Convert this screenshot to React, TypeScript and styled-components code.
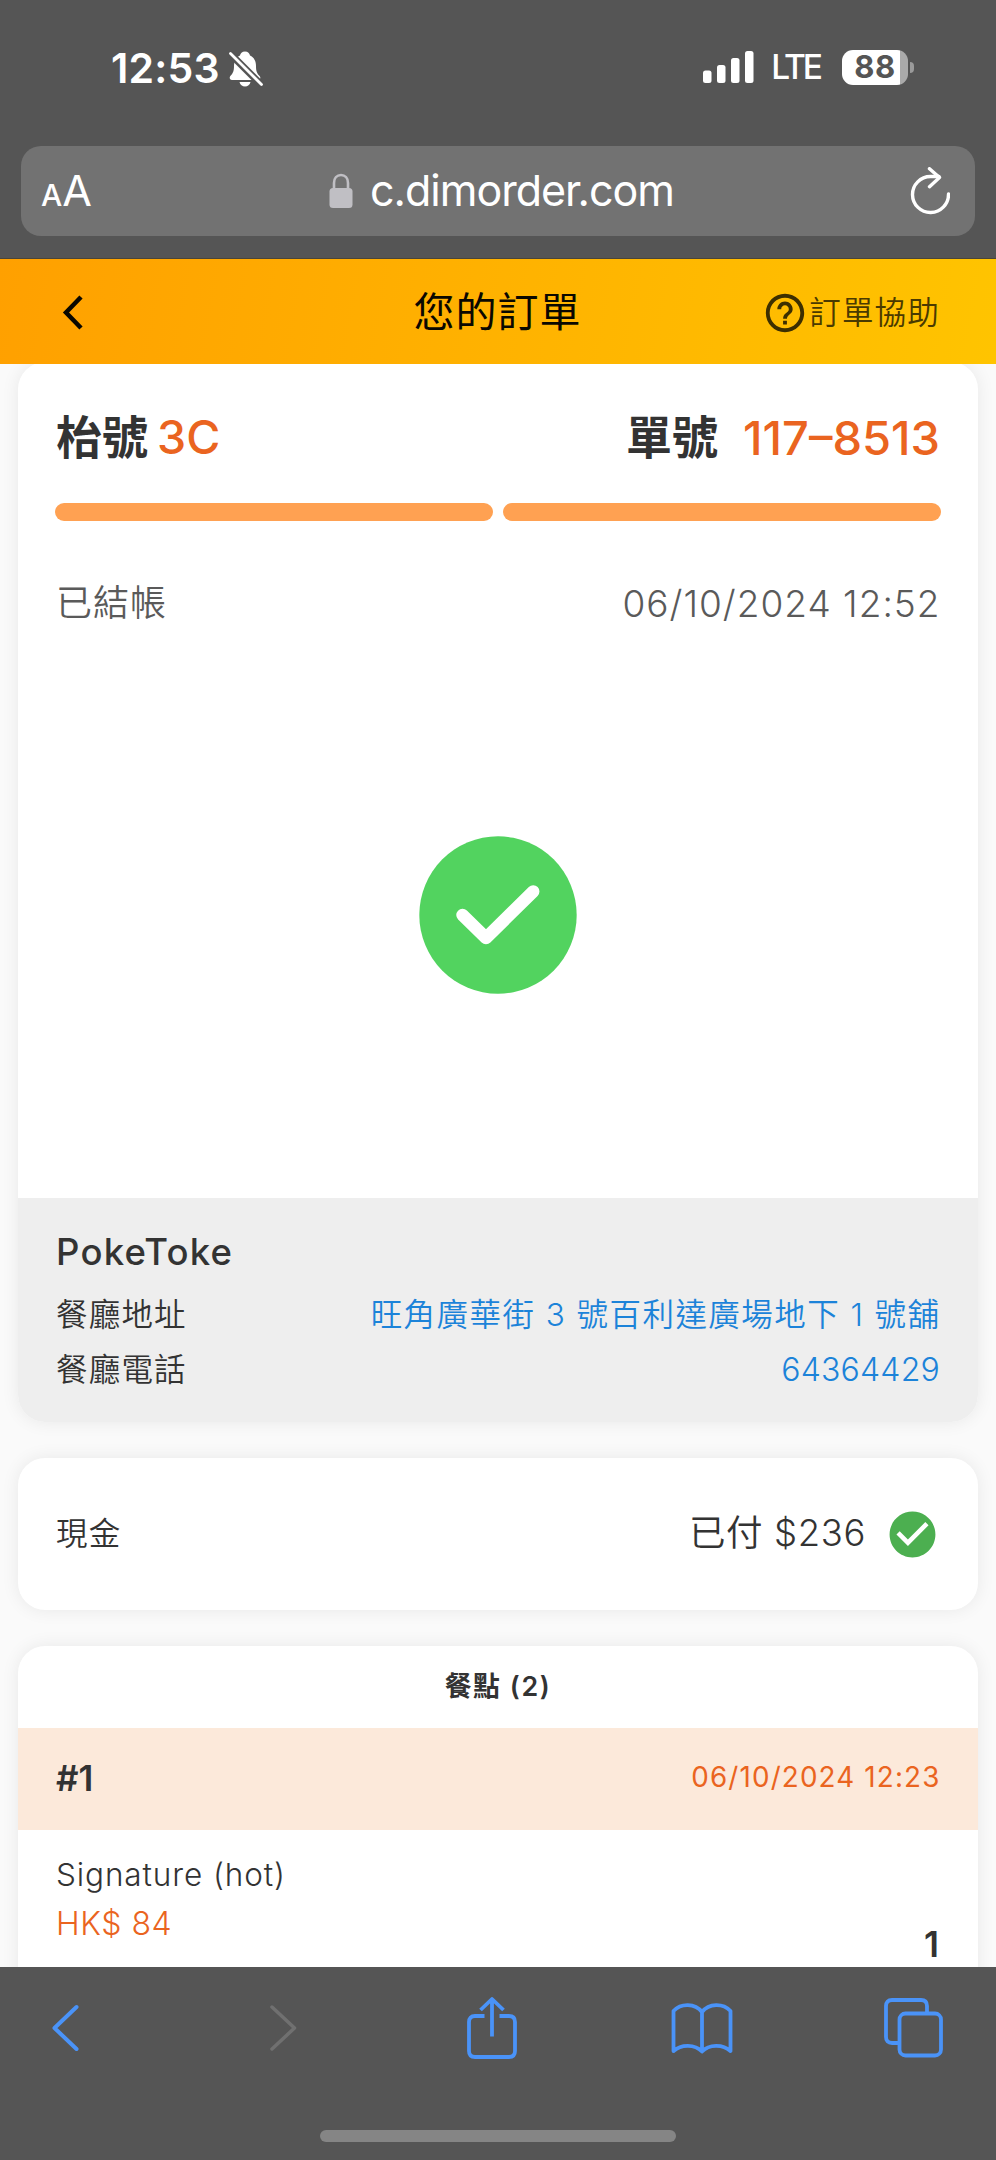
import React from "react";
import styled, { createGlobalStyle } from "styled-components";

const GlobalStyle = createGlobalStyle`
  *, *::before, *::after { box-sizing: border-box; }
  body {
    margin: 0;
    background: #fafafa;
    font-family: Inter, "Noto Sans CJK TC", sans-serif;
    -webkit-font-smoothing: antialiased;
  }
  svg { display: block; flex: none; }
`;

const Screen = styled.div`
  width: 996px;
  height: 2160px;
  display: flex;
  flex-direction: column;
  overflow: hidden;
  background: #fafafa;
`;

const BrowserTop = styled.header`
  height: 259px;
  flex: none;
  background: #555;
  border-bottom: 1px solid #4a4538;
  padding: 0 21px;
`;

const StatusBar = styled.div`
  height: 146px;
  padding: 38px 61px 48px 90px;
  display: flex;
  justify-content: space-between;
  align-items: center;
`;

const StatusGroup = styled.div<{ $mt?: number }>`
  display: flex;
  align-items: center;
  margin-top: ${(p) => p.$mt ?? 0}px;
`;

interface TextProps {
  $size: number;
  $weight?: number;
  $color?: string;
  $spacing?: number;
  $ml?: number;
}

const Text = styled.span<TextProps>`
  font-size: ${(p) => p.$size}px;
  font-weight: ${(p) => p.$weight ?? 400};
  color: ${(p) => p.$color ?? "#333"};
  letter-spacing: ${(p) => p.$spacing ?? 0}px;
  margin-left: ${(p) => p.$ml ?? 0}px;
  line-height: 1.2;
  white-space: pre;
`;

const Battery = styled.div`
  width: 66px;
  height: 35px;
  margin-left: 22px;
  border-radius: 11px;
  display: flex;
  align-items: center;
  justify-content: center;
  background: linear-gradient(to right, #fff 58px, #aaa 58px);
`;

const BatteryTip = styled.div`
  width: 4px;
  height: 11px;
  margin-left: 2px;
  border-radius: 0 4px 4px 0;
  background: #9a9a9a;
`;

const AddressBar = styled.div`
  height: 90px;
  border-radius: 20px;
  background: #727272;
  display: flex;
  align-items: center;
  justify-content: space-between;
  padding: 0 25px 0 20px;
`;

const TextSize = styled.div`
  display: flex;
  align-items: baseline;
  width: 60px;
`;

const Address = styled.div`
  display: flex;
  align-items: center;
  gap: 17px;
  padding-left: 12px;
`;

const ReloadSlot = styled.div`
  width: 60px;
  display: flex;
  justify-content: flex-end;
`;

const AppHeader = styled.div`
  height: 105px;
  flex: none;
  display: grid;
  grid-template-columns: 1fr auto 1fr;
  align-items: center;
  padding: 3px 56px 0 55px;
  background: linear-gradient(100deg, #ffa000, #ffc400);
`;

const BackIcon = styled.svg`
  margin-left: 6px;
`;

const HelpLink = styled.div`
  display: flex;
  align-items: center;
  justify-content: flex-end;
  gap: 1px;
`;

const Main = styled.main`
  flex: 1;
  min-height: 0;
  overflow: hidden;
  display: flex;
  flex-direction: column;
  gap: 36px;
  padding: 0 18px;
`;

const Card = styled.section<{ $height: number; $top?: number }>`
  flex: none;
  height: ${(p) => p.$height}px;
  margin-top: ${(p) => p.$top ?? 0}px;
  border-radius: 27px;
  background: #fff;
  box-shadow: 0 0 18px rgba(0, 0, 0, 0.075);
  display: flex;
  flex-direction: column;
  overflow: hidden;
`;

const Row = styled.div<{ $height: number; $mt?: number; $end?: number }>`
  height: ${(p) => p.$height}px;
  margin-top: ${(p) => p.$mt ?? 0}px;
  flex: none;
  display: flex;
  align-items: center;
  justify-content: space-between;
  padding: 0 ${(p) => p.$end ?? 38}px 0 38px;
`;

const Inline = styled.div`
  display: flex;
  align-items: center;
`;

const Progress = styled.div`
  display: flex;
  gap: 10px;
  margin: 35px 37px 0;
`;

const Segment = styled.div`
  flex: 1;
  height: 18px;
  border-radius: 9px;
  background: #ffa152;
`;

const Result = styled.div`
  flex: 1;
  padding-top: 3px;
  display: flex;
  align-items: center;
  justify-content: center;
`;

const Restaurant = styled.div`
  height: 224px;
  flex: none;
  background: #eee;
  padding-top: 31px;
`;

const ItemsHeading = styled.div`
  height: 82px;
  flex: none;
  display: flex;
  align-items: center;
  justify-content: center;
  padding-bottom: 2px;
`;

const BatchHeader = styled(Row)`
  background: #fce9da;
  padding-bottom: 3px;
`;

const Item = styled.div`
  display: flex;
  flex-direction: column;
`;

const BrowserBottom = styled.footer`
  height: 193px;
  flex: none;
  background: #555;
  display: flex;
  flex-direction: column;
  align-items: center;
`;

const ToolRow = styled.div`
  height: 122px;
  width: 100%;
  padding-left: 50px;
  display: flex;
  align-items: center;
`;

const Tool = styled.div<{ $gap?: number }>`
  margin-left: ${(p) => p.$gap ?? 0}px;
`;

const HomeIndicator = styled.div`
  margin-top: 41px;
  width: 356px;
  height: 12px;
  border-radius: 6px;
  background: #858585;
`;

const ORANGE = "#ea6420";
const LINK = "#1c83d9";
const BLUE = "#4a93f8";

const BellIcon = styled.svg`
  margin-left: 8px;
`;

const BellOff = () => (
  <BellIcon width="36" height="38" viewBox="0 0 36 38">
    <path
      d="M17 1.5c-3 0-4.6 1.8-5 3.9C8 7.3 6 11 6 16c0 5-.8 7-3.700 10C1.200 27.500 1.500 30 4 30h26c2.500 0 3-2.500 1.600-4-2.900-3-3.600-5-3.600-10 0-5-2-8.700-6-10.600-.4-2.100-2-3.900-5-3.900z"
      fill="#fff"
    />
    <path d="M11.500 32h11c-.6 2.800-2.800 4.500-5.500 4.500s-4.900-1.700-5.500-4.500z" fill="#fff" />
    <path d="M2 3.500 L33.500 35" stroke="#555" strokeWidth="7" />
    <path d="M2.500 3.500 L33.500 34.500" stroke="#fff" strokeWidth="2.800" strokeLinecap="round" />
  </BellIcon>
);

const Signal = () => (
  <svg width="51" height="33" viewBox="0 0 51 33">
    <g fill="#fff">
      <rect x="0" y="19.500" width="8.500" height="12.500" rx="2.500" />
      <rect x="14" y="14" width="8.500" height="18" rx="2.500" />
      <rect x="28" y="7" width="8.500" height="25" rx="2.500" />
      <rect x="42" y="0" width="8.500" height="32" rx="2.500" />
    </g>
  </svg>
);

const Lock = () => (
  <svg width="24" height="36" viewBox="0 0 24 36">
    <rect x="0.500" y="15" width="23" height="20" rx="3.500" fill="#c0bfc4" />
    <path d="M5 16V10c0-5 3-8 7-8s7 3 7 8v6" fill="none" stroke="#c0bfc4" strokeWidth="2.600" />
  </svg>
);

const Reload = () => (
  <svg width="40" height="48" viewBox="0 0 40 48">
    <g fill="none" stroke="#fff" strokeWidth="3.400" strokeLinecap="round" strokeLinejoin="round">
      <path d="M38.500 27A18 18 0 1 1 20.500 9.500h8.500" />
      <path d="M19.500 1.700l10 8.800-10 9.200" />
    </g>
  </svg>
);

const HelpIcon = () => (
  <svg width="46" height="46" viewBox="0 0 24 24" fill="#3d2f00">
    <path d="M11 18h2v-2h-2v2zm1-16C6.480 2 2 6.480 2 12s4.480 10 10 10 10-4.480 10-10S17.520 2 12 2zm0 18c-4.410 0-8-3.590-8-8s3.590-8 8-8 8 3.590 8 8-3.590 8-8 8zm0-14c-2.210 0-4 1.790-4 4h2c0-1.100.9-2 2-2s2 .9 2 2c0 2-3 1.750-3 5h2c0-2.250 3-2.500 3-5 0-2.210-1.790-4-4-4z" />
  </svg>
);

const PaidBadge = styled.svg`
  margin-left: 19px;
`;

const PaidIcon = () => (
  <PaidBadge width="55" height="55" viewBox="0 0 24 24" fill="#4caf50">
    <path d="M12 2C6.480 2 2 6.480 2 12s4.480 10 10 10 10-4.480 10-10S17.520 2 12 2zm-2 15l-5-5 1.410-1.410L10 14.170l7.590-7.590L19 8l-9 9z" />
  </PaidBadge>
);

export default function App() {
  return (
    <Screen>
      <GlobalStyle />
      <BrowserTop>
        <StatusBar>
          <StatusGroup $mt={1}>
            <Text $size={41} $weight={600} $color="#fff" $spacing={0.2}>12:53</Text>
            <BellOff />
          </StatusGroup>
          <StatusGroup $mt={-2}>
            <Signal />
            <Text $size={33.5} $weight={450} $color="#fff" $spacing={-3} $ml={17}>LTE</Text>
            <Battery>
              <Text $size={31} $weight={700} $color="#555" $spacing={0.5}>88</Text>
            </Battery>
            <BatteryTip />
          </StatusGroup>
        </StatusBar>
        <AddressBar>
          <TextSize>
            <Text $size={30} $weight={500} $color="#fff">A</Text>
            <Text $size={43} $color="#fff">A</Text>
          </TextSize>
          <Address>
            <Lock />
            <Text $size={43} $color="#fff" $spacing={-1}>c.dimorder.com</Text>
          </Address>
          <ReloadSlot><Reload /></ReloadSlot>
        </AddressBar>
      </BrowserTop>

      <AppHeader>
        <BackIcon width="24" height="38" viewBox="0 0 24 38">
          <path d="M20 3L5 18.500l15 15.500" fill="none" stroke="#0a0800" strokeWidth="4.500" />
        </BackIcon>
        <Text $size={41} $color="#0a0800" $spacing={1}>您的訂單</Text>
        <HelpLink>
          <HelpIcon />
          <Text $size={31.5} $weight={350} $color="#4a3a00" $spacing={1.2}>訂單協助</Text>
        </HelpLink>
      </AppHeader>

      <Main>
        <Card $height={1060} $top={-2}>
          <Row $height={60} $mt={46}>
            <Inline>
              <Text $size={46} $weight={700}>枱號</Text>
              <Text $size={46.5} $weight={500} $color={ORANGE} $ml={9}>3C</Text>
            </Inline>
            <Inline>
              <Text $size={46} $weight={700}>單號</Text>
              <Text $size={47} $weight={500} $color={ORANGE} $ml={25}>117–8513</Text>
            </Inline>
          </Row>
          <Progress>
            <Segment />
            <Segment />
          </Progress>
          <Row $height={50} $mt={58} $end={37.5}>
            <Text $size={36} $weight={350} $color="#5a5a5a" $spacing={1}>已結帳</Text>
            <Text $size={37} $weight={350} $color="#5a5a5a" $spacing={1}>06/10/2024 12:52</Text>
          </Row>
          <Result>
            <svg width="158" height="158" viewBox="0 0 158 158">
              <circle cx="79" cy="79" r="78.700" fill="#52d35f" />
              <path d="M43.500 79L67 102L114.200 55.500" fill="none" stroke="#fff" strokeWidth="12.500" strokeLinecap="round" strokeLinejoin="round" />
            </svg>
          </Result>
          <Restaurant>
            <Row $height={48}>
              <Text $size={36.5} $weight={500} $spacing={1.2}>PokeToke</Text>
            </Row>
            <Row $height={48} $mt={14} $end={37.5}>
              <Text $size={31.5} $weight={350} $spacing={1.2}>餐廳地址</Text>
              <Text $size={31.5} $weight={350} $spacing={1.45} $color={LINK}>旺角廣華街 3 號百利達廣場地下 1 號舖</Text>
            </Row>
            <Row $height={48} $mt={7}>
              <Text $size={31.5} $weight={350} $spacing={1.2}>餐廳電話</Text>
              <Text $size={32} $weight={350} $spacing={0.2} $color={LINK}>64364429</Text>
            </Row>
          </Restaurant>
        </Card>

        <Card $height={152}>
          <Row $height={152}>
            <Text $size={31.5} $weight={350} $spacing={1.2}>現金</Text>
            <Inline>
              <Text $size={36.5} $weight={350} $spacing={0.6}>已付 $236</Text>
              <PaidIcon />
            </Inline>
          </Row>
        </Card>

        <Card $height={500}>
          <ItemsHeading>
            <Text $size={26.8} $weight={600} $spacing={1.6}>餐點 (2)</Text>
          </ItemsHeading>
          <BatchHeader $height={102} $end={37.5}>
            <Text $size={35} $weight={600}>#1</Text>
            <Text $size={27.8} $color={ORANGE} $spacing={1.15}>06/10/2024 12:23</Text>
          </BatchHeader>
          <Item>
            <Row $height={46} $mt={22}>
              <Text $size={31.5} $weight={350} $spacing={0.9}>Signature (hot)</Text>
            </Row>
            <Row $height={46} $mt={3}>
              <Text $size={32} $weight={350} $color={ORANGE} $spacing={0.5}>HK$ 84</Text>
            </Row>
            <Row $height={40} $mt={-22} $end={39}>
              <span />
              <Text $size={35.5} $weight={600}>1</Text>
            </Row>
          </Item>
        </Card>
      </Main>

      <BrowserBottom>
        <ToolRow>
          <Tool>
            <svg width="31" height="50" viewBox="0 0 31 50">
              <path d="M26.500 4L4.500 25l22 21" fill="none" stroke={BLUE} strokeWidth="4" strokeLinecap="round" strokeLinejoin="round" />
            </svg>
          </Tool>
          <Tool $gap={187}>
            <svg width="31" height="50" viewBox="0 0 31 50">
              <path d="M4 4L26.500 25L4 46" fill="none" stroke="#707070" strokeWidth="3.500" strokeLinecap="round" strokeLinejoin="round" />
            </svg>
          </Tool>
          <Tool $gap={168}>
            <svg width="50" height="62" viewBox="0 0 50 62">
              <g fill="none" stroke={BLUE} strokeWidth="3.800" strokeLinejoin="round">
                <path d="M17.500 19H8q-6 0-6 6v29q0 6 6 6h34q6 0 6-6V25q0-6-6-6h-9.500" />
                <path d="M25 39.500V3M13.500 13L25 2l11.500 11" />
              </g>
            </svg>
          </Tool>
          <Tool $gap={154}>
            <svg width="62" height="52" viewBox="0 0 62 52">
              <path d="M31 10C24 1 10 1 2.500 9V49C10 42 24 42 31 49.500C38 42 52 42 59.500 49V9C52 1 38 1 31 10zV49" fill="none" stroke={BLUE} strokeWidth="3.800" strokeLinejoin="round" />
            </svg>
          </Tool>
          <Tool $gap={150}>
            <svg width="60" height="60" viewBox="0 0 60 60">
              <g fill="none" stroke={BLUE} strokeWidth="3.800">
                <path d="M16 45H9q-6 0-6-6V8q0-6 6-6h29q6 0 6 6v7" />
                <rect x="16.500" y="15.500" width="41.500" height="42" rx="6" />
              </g>
            </svg>
          </Tool>
        </ToolRow>
        <HomeIndicator />
      </BrowserBottom>
    </Screen>
  );
}
